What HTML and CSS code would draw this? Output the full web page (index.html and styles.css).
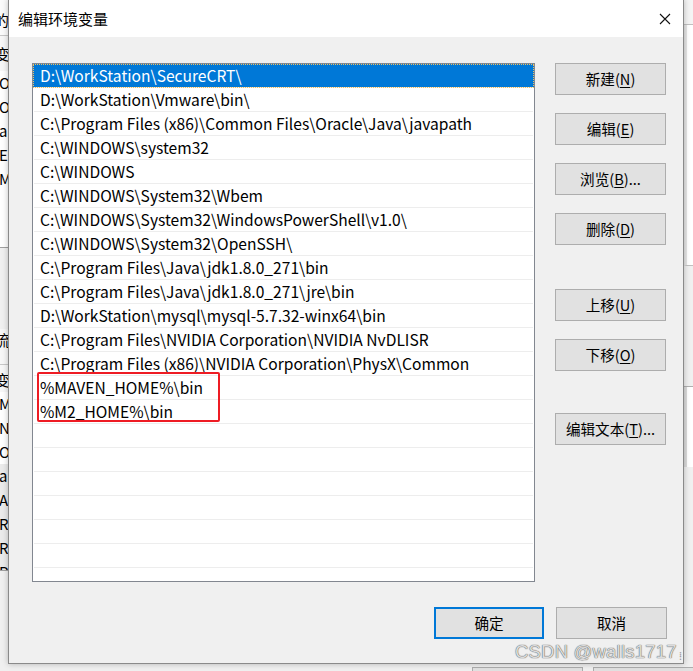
FILE: index.html
```html
<!DOCTYPE html>
<html lang="zh-CN">
<head>
<meta charset="utf-8">
<title>编辑环境变量</title>
<link rel="stylesheet" href="styles.css">
</head>
<body>
<div class="desktop">
  <div class="bg-left">
    <div class="bg-cap">的</div>
    <div class="bg-head first">变量</div>
    <div class="bg-row">Or</div>
    <div class="bg-row">Or</div>
    <div class="bg-row">a</div>
    <div class="bg-row">E</div>
    <div class="bg-row">M</div>
    <div class="bg-gap"></div>
    <div class="bg-gap2"></div>
    <div class="bg-head2">流</div>
    <div class="bg-head">变量</div>
    <div class="bg-row">MY</div>
    <div class="bg-row">NU</div>
    <div class="bg-row">OS</div>
    <div class="bg-row shade">a</div>
    <div class="bg-row shade">A</div>
    <div class="bg-row shade">R</div>
    <div class="bg-row shade">R</div>
    <div class="bg-row shade cut">P</div>
  </div>
  <div class="bg-right">
    <div class="bg-r1"></div>
    <div class="bg-r2"></div>
    <div class="bg-r3"></div>
    <div class="bg-r4"></div>
  </div>
  <div class="bg-buttons">
    <div class="bg-btn"></div>
    <div class="bg-btn"></div>
  </div>

  <div class="dialog">
    <div class="titlebar">
      <span class="title">编辑环境变量</span>
      <svg class="close" width="12" height="12" viewBox="0 0 12 12"><path d="M1 1L11 11M11 1L1 11" stroke="#111" stroke-width="1.1" fill="none"/></svg>
    </div>
    <div class="body">
      <div class="main">
        <div class="list">
          <div class="row selected">D:\WorkStation\SecureCRT\</div>
          <div class="row">D:\WorkStation\Vmware\bin\</div>
          <div class="row">C:\Program Files (x86)\Common Files\Oracle\Java\javapath</div>
          <div class="row">C:\WINDOWS\system32</div>
          <div class="row">C:\WINDOWS</div>
          <div class="row">C:\WINDOWS\System32\Wbem</div>
          <div class="row">C:\WINDOWS\System32\WindowsPowerShell\v1.0\</div>
          <div class="row">C:\WINDOWS\System32\OpenSSH\</div>
          <div class="row">C:\Program Files\Java\jdk1.8.0_271\bin</div>
          <div class="row">C:\Program Files\Java\jdk1.8.0_271\jre\bin</div>
          <div class="row">D:\WorkStation\mysql\mysql-5.7.32-winx64\bin</div>
          <div class="row">C:\Program Files\NVIDIA Corporation\NVIDIA NvDLISR</div>
          <div class="row">C:\Program Files (x86)\NVIDIA Corporation\PhysX\Common</div>
          <div class="row">%MAVEN_HOME%\bin</div>
          <div class="row">%M2_HOME%\bin</div>
          <div class="row"></div>
          <div class="row"></div>
          <div class="row"></div>
          <div class="row"></div>
          <div class="row"></div>
          <div class="row last"></div>
          <div class="highlight"></div>
        </div>
        <div class="side">
          <div class="group">
            <button class="btn">新建(<u>N</u>)</button>
            <button class="btn">编辑(<u>E</u>)</button>
            <button class="btn">浏览(<u>B</u>)...</button>
            <button class="btn">删除(<u>D</u>)</button>
          </div>
          <div class="group move">
            <button class="btn">上移(<u>U</u>)</button>
            <button class="btn">下移(<u>O</u>)</button>
          </div>
          <div class="group text">
            <button class="btn">编辑文本(<u>T</u>)...</button>
          </div>
        </div>
      </div>
      <div class="footer">
        <button class="btn default">确定</button>
        <button class="btn">取消</button>
      </div>
    </div>
    <div class="grip">⁞</div>
  </div>
  <div class="watermark">CSDN @walls1717</div>
</div>
</body>
</html>
```
FILE: styles.css
```css
html, body {
  margin: 0;
  padding: 0;
}
body {
  width: 693px;
  height: 671px;
  overflow: hidden;
  background: #f0f0f0;
  font-family: "Noto Sans CJK SC", "Noto Sans", sans-serif;
  color: #000;
}
.desktop {
  position: relative;
  width: 693px;
  height: 671px;
  overflow: hidden;
  background: #f0f0f0;
}

/* background window pieces */
.bg-left {
  width: 40px;
  display: flex;
  flex-direction: column;
  font-size: 15px;
  line-height: 24px;
  color: #000;
}
.bg-cap {
  height: 35px;
  line-height: 40px;
  background: #fbfbfb;
  border-bottom: 1px solid #c8c8c8;
  text-indent: -6px;
}
.bg-head {
  height: 27px;
  line-height: 30px;
  text-indent: -5px;
  background: #f7f7f7;
}
.bg-head.first {
  height: 35px;
  line-height: 36px;
}
.bg-row {
  height: 24px;
  background: #fff;
  text-indent: -1px;
}
.bg-row.shade { background: #ebebeb; }
.bg-row.cut { height: 10px; overflow: hidden; border-bottom: 1px solid #a0a0a0; }
.bg-gap {
  height: 56px;
  background: #fff;
  border-bottom: 1px solid #a0a0a0;
}
.bg-gap2 {
  height: 81px;
  background: #f0f0f0;
}
.bg-head2 {
  height: 35px;
  line-height: 22px;
  text-indent: -5px;
  border-bottom: 1px solid #c8c8c8;
  background: #f7f7f7;
}
.bg-right {
  position: absolute;
  left: 684px;
  top: 0;
  width: 9px;
  height: 671px;
  display: flex;
  flex-direction: column;
}
.bg-r1 { height: 24px; border-bottom: 1px solid #c0c0c0; background: #f4f4f4; }
.bg-r2 { height: 240px; background: #fff; border-bottom: 1px solid #c0c0c0; border-left: 3px solid #e6e6e6; }
.bg-r3 { height: 120px; background: #f0f0f0; border-bottom: 1px solid #b0b0b0; }
.bg-r4 { height: 80px; background: #fff; border-left: 3px solid #dcdcdc; }
.bg-buttons {
  position: absolute;
  left: 472px;
  top: 667px;
  display: flex;
  gap: 10px;
}
.bg-btn {
  width: 109px;
  height: 20px;
  border: 1px solid #adadad;
  background: #e1e1e1;
}

/* dialog window */
.dialog {
  position: absolute;
  left: 8px;
  top: -1px;
  width: 674px;
  height: 663px;
  border: 1px solid #8a8a8a;
  background: #f0f0f0;
  box-shadow: 0 0 6px rgba(0,0,0,0.25);
  display: flex;
  flex-direction: column;
}
.titlebar {
  height: 37px;
  background: #fff;
  display: flex;
  align-items: center;
  justify-content: space-between;
  padding: 0 12px 0 9px;
  flex-shrink: 0;
}
.title {
  font-size: 15px;
  line-height: 20px;
  margin-top: 1px;
}
.close { margin-top: 1px; }
.body {
  flex: 1;
  padding: 26px 16px 0 23px;
  display: flex;
  flex-direction: column;
}
.main {
  display: flex;
  gap: 20px;
}
.list {
  position: relative;
  width: 501px;
  height: 517px;
  border: 1px solid #828790;
  background: #fff;
  overflow: hidden;
}
.row {
  height: 23px;
  border-bottom: 1px solid #ededed;
  margin: 0 1px 0 1px;
  padding-left: 6px;
  font-size: 15.6px;
  line-height: 23px;
  white-space: nowrap;
  color: #000;
}
.row.selected {
  margin: 0;
  padding-left: 7px;
  height: 23px;
  background: #0078d7;
  color: #fff;
  outline: 1px dotted #f0c060;
  outline-offset: -1px;
}
.highlight {
  position: absolute;
  left: 4px;
  top: 308px;
  width: 179px;
  height: 46px;
  border: 2px solid #ee1c24;
  border-radius: 2px;
}
.side {
  display: flex;
  flex-direction: column;
}
.group {
  display: flex;
  flex-direction: column;
  gap: 18px;
}
.group.move { margin-top: 44px; }
.group.text { margin-top: 42px; }
.btn {
  width: 111px;
  height: 32px;
  padding: 0;
  border: 1px solid #adadad;
  background: #e1e1e1;
  font-family: "Noto Sans CJK SC", "Noto Sans", sans-serif;
  font-size: 14.6px;
  color: #000;
  line-height: 28px;
}
.btn u { text-underline-offset: 2px; }
.footer {
  margin-top: 25px;
  display: flex;
  justify-content: flex-end;
  gap: 12px;
}
.btn.default {
  border: 2px solid #0078d7;
  width: 110px;
}
.grip {
  position: absolute;
  right: 1px;
  bottom: 2px;
  font-size: 11px;
  line-height: 11px;
  color: #999;
}
.watermark {
  position: absolute;
  left: 515px;
  top: 641px;
  font-family: "Liberation Sans", Arial, sans-serif;
  font-size: 18.5px;
  line-height: 22px;
  color: #dcdcdc;
  text-shadow: 0 0 1px #555, 0 0 1px #777;
  letter-spacing: 0.2px;
}
```
